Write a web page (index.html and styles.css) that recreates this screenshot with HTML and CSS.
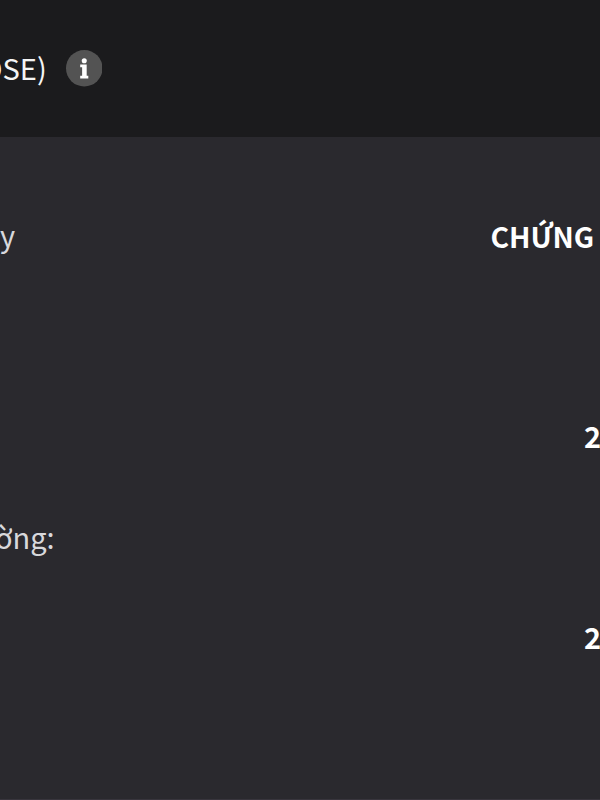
FILE: index.html
```html
<!DOCTYPE html>
<html lang="vi">
<head>
    <meta charset="UTF-8">
    <meta name="viewport" content="width=device-width, initial-scale=1.0">
    <title>HOSE</title>
    <link rel="stylesheet" href="styles.css">
</head>
<body>
    <header class="header">
        <span class="exchange">OSE)</span>
        <svg class="info" viewBox="0 0 36 36">
            <circle cx="18" cy="18" r="18" fill="#535353"/>
            <circle cx="18" cy="10.6" r="2.5" fill="#fff"/>
            <path fill="#fff" d="M14 14.4h6.4v11H22V28h-8v-2.6h1.9V17H14z"/>
        </svg>
    </header>
    <main class="details">
        <div class="row">
            <span class="label">y</span>
            <span class="value value-name">CHỨNG</span>
        </div>
        <div class="row"></div>
        <div class="row">
            <span class="value">2</span>
        </div>
        <div class="row">
            <span class="label label-cut">ờng:</span>
        </div>
        <div class="row">
            <span class="value">2</span>
        </div>
    </main>
</body>
</html>
```

FILE: styles.css
```css
body {
    margin: 0;
    height: 800px;
    display: flex;
    flex-direction: column;
    overflow: hidden;
    background: #2a292e;
    font-family: "Noto Sans CJK SC", "Noto Sans", sans-serif;
    font-size: 29px;
    color: #fff;
}
.header {
    height: 137px;
    box-sizing: border-box;
    display: flex;
    align-items: center;
    background: #1b1b1d;
}
.exchange {
    margin-left: -19px;
    margin-right: 19px;
    padding-bottom: 3px;
    color: #f5f5f5;
}
.info {
    width: 36.5px;
    height: 36.5px;
}
.details {
    flex: 1;
    box-sizing: border-box;
    padding-top: 47px;
    border-bottom: 1px solid #38353d;
}
.row {
    height: 100.5px;
    display: flex;
    align-items: center;
}
.label {
    color: #d8d8dc;
}
.label-cut {
    margin-left: -5px;
}
.value {
    margin-left: auto;
    margin-right: -1px;
    font-weight: bold;
}
.value-name {
    margin-right: 6px;
    padding-top: 2px;
    font-size: 28.4px;
}
```
